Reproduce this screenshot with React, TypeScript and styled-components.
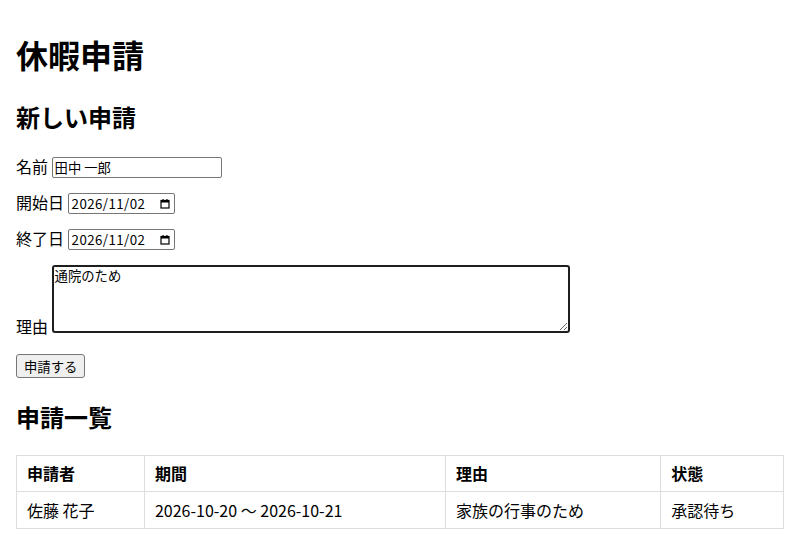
import React from "react";
import styled, { createGlobalStyle } from "styled-components";

const Global = createGlobalStyle`
  body {
    margin: 8px;
    font-family: "Noto Sans CJK JP", "Noto Sans", sans-serif;
    color: #000;
    background: #fff;
  }
`;

const Page = styled.div`
  padding: 0 8px;
`;

const Title = styled.h1`
  font-size: 32px;
  font-weight: bold;
  margin: 23px 0 22px;
  line-height: 46px;
`;

const SectionTitle = styled.h2<{ $top?: number; $bottom?: number }>`
  font-size: 24px;
  font-weight: bold;
  margin: ${(p) => p.$top ?? 20}px 0 ${(p) => p.$bottom ?? 20}px;
  line-height: 35px;
`;

const Form = styled.form`
  display: flex;
  flex-direction: column;
  align-items: flex-start;
  gap: 12px;
`;

const Field = styled.label<{ $offset?: number }>`
  display: block;
  font-size: 16px;
  line-height: 24px;
  margin-top: ${(p) => p.$offset ?? 0}px;
`;

const controlFont = `
  font-family: "Noto Sans CJK JP", sans-serif;
  font-size: 13.33px;
`;

const TextInput = styled.input`
  ${controlFont}
  box-sizing: border-box;
  width: 170px;
  height: 21px;
  padding: 1px 2px;
  border: 1px solid #767676;
  border-radius: 2px;
  vertical-align: baseline;
`;

const DateBox = styled.span`
  ${controlFont}
  display: inline-flex;
  align-items: center;
  justify-content: space-between;
  box-sizing: border-box;
  width: 107px;
  height: 21px;
  padding: 0 4px 0 3px;
  border: 1px solid #767676;
  border-radius: 2px;
  line-height: 19px;
  vertical-align: baseline;
  letter-spacing: 0.4px;
`;

const Reason = styled.textarea`
  ${controlFont}
  box-sizing: border-box;
  width: 518px;
  height: 68px;
  padding: 0 1px;
  border: 2px solid #1e1e1e;
  border-radius: 3px;
  outline: none;
  line-height: 18px;
  vertical-align: baseline;
`;

const Submit = styled.button`
  ${controlFont}
  box-sizing: border-box;
  height: 24px;
  padding: 0 7px;
  background: #efefef;
  border: 1px solid #767676;
  border-radius: 3px;
  color: #000;
  margin-top: 4px;
`;

const Table = styled.table`
  width: 100%;
  border-collapse: collapse;
`;

const HeadCell = styled.th`
  border: 1px solid #ddd;
  padding: 6px 10px;
  text-align: left;
  font-size: 16px;
  line-height: 23px;
`;

const Cell = styled.td`
  border: 1px solid #ddd;
  padding: 7px 10px 6px;
  font-size: 16px;
  line-height: 23px;
`;

function CalendarIcon() {
  return (
    <svg width="10" height="10" viewBox="0 0 10 10" aria-hidden="true">
      <rect x="1" y="1.5" width="8" height="7.5" fill="none" stroke="#000" strokeWidth="1.2" />
      <rect x="1" y="1.5" width="8" height="2" fill="#000" />
      <rect x="2.5" y="0" width="1.2" height="2" fill="#000" />
      <rect x="6.3" y="0" width="1.2" height="2" fill="#000" />
    </svg>
  );
}

function DateField({ value }: { value: string }) {
  return (
    <DateBox>
      <span>{value}</span>
      <CalendarIcon />
    </DateBox>
  );
}

export default function App() {
  return (
    <Page>
      <Global />
      <Title>休暇申請</Title>
      <SectionTitle>新しい申請</SectionTitle>
      <Form onSubmit={(e) => e.preventDefault()}>
        <Field>
          名前 <TextInput type="text" defaultValue="田中 一郎" />
        </Field>
        <Field>
          開始日 <DateField value="2026/11/02" />
        </Field>
        <Field>
          終了日 <DateField value="2026/11/02" />
        </Field>
        <Field $offset={3}>
          理由 <Reason defaultValue="通院のため" />
        </Field>
        <Submit type="submit">申請する</Submit>
      </Form>
      <SectionTitle $top={21} $bottom={21}>申請一覧</SectionTitle>
      <Table>
        <thead>
          <tr>
            <HeadCell>申請者</HeadCell>
            <HeadCell>期間</HeadCell>
            <HeadCell>理由</HeadCell>
            <HeadCell>状態</HeadCell>
          </tr>
        </thead>
        <tbody>
          <tr>
            <Cell>佐藤 花子</Cell>
            <Cell>2026-10-20 〜 2026-10-21</Cell>
            <Cell>家族の行事のため</Cell>
            <Cell>承認待ち</Cell>
          </tr>
        </tbody>
      </Table>
    </Page>
  );
}
